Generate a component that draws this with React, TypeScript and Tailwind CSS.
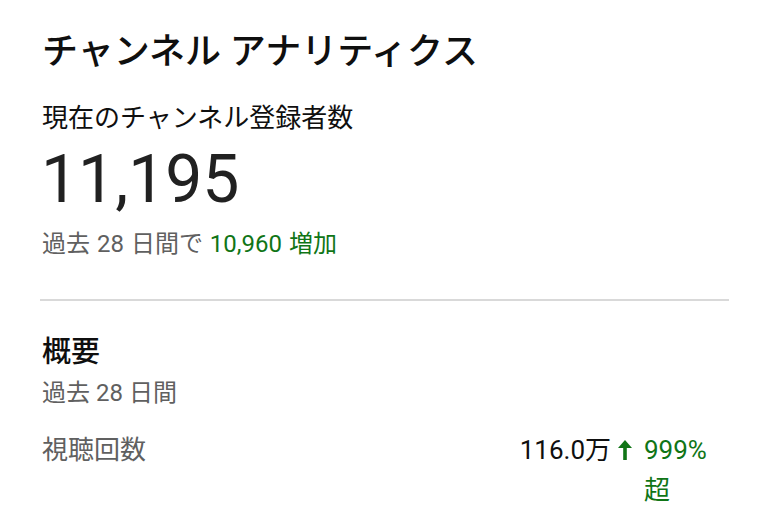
export default function App() {
  return (
    <div className="w-[762px] h-[523px] overflow-hidden bg-white pl-[40px] pr-[33px] pt-[34px] font-['Roboto','Noto_Sans_CJK_JP',sans-serif] text-[#0f0f0f]">
      <h1 className="text-[36px] leading-[36px] font-medium pl-[2px]">チャンネル アナリティクス</h1>

      <div className="mt-[31px] pl-[2px] text-[26px] leading-[34px]">現在のチャンネル登録者数</div>
      <div className="mt-[9px] pl-[1px] text-[66px] leading-[72px] text-[#212121]">11,195</div>
      <div className="mt-[13px] pl-[2px] text-[24px] leading-[30px] text-[#606060] [word-spacing:1px]">
        過去 28 日間で <span className="text-[#107516]">10,960 増加</span>
      </div>

      <div className="mt-[40px] h-[2px] bg-[#d9d9d9]" />

      <h2 className="mt-[33px] pl-[2px] text-[29px] leading-[36px] font-medium">概要</h2>
      <div className="mt-[8px] pl-[2px] text-[24px] leading-[30px] text-[#606060]">過去 28 日間</div>

      <div className="mt-[22px] pl-[2px] flex items-start justify-between text-[26px] leading-[40px]">
        <span className="text-[#606060]">視聴回数</span>
        <div className="flex items-start">
          <span className="text-[#0f0f0f]">116.0万</span>
          <svg viewBox="0 0 14 20" className="ml-[7px] mt-[10px] w-[14px] h-[20px]" fill="#107516">
            <path d="M7 0L14 8H8.8V20H5.2V8H0Z" />
          </svg>
          <span className="ml-[12px] w-[85px] text-[#107516]">999% 超</span>
        </div>
      </div>
    </div>
  );
}
